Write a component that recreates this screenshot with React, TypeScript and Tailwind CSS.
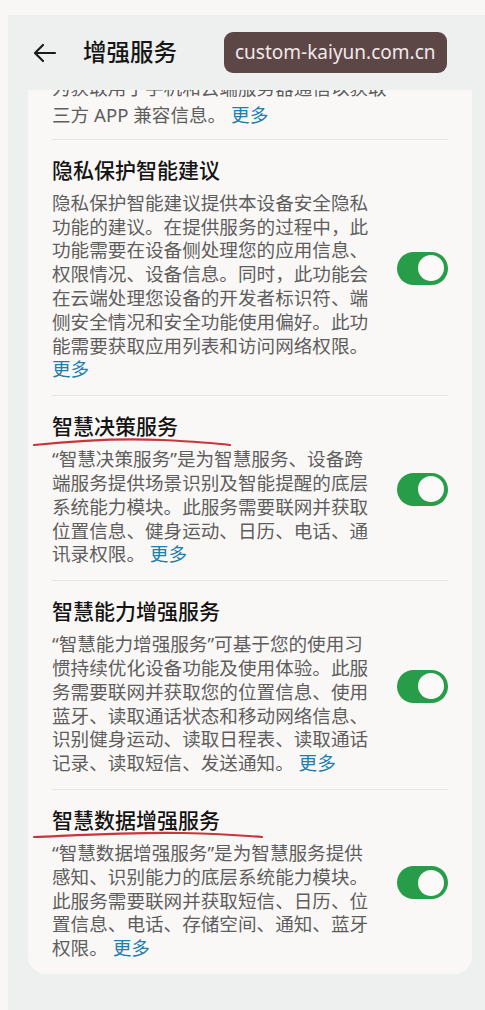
import React from "react";

type Section = {
  title: string;
  lines: string[];
  tail: string; // text on the last line before 更多
  underline?: string; // svg path for the red pen mark
};

const FONT = '"Noto Sans", "Noto Sans CJK SC", sans-serif';

const sections: Section[] = [
  {
    title: "隐私保护智能建议",
    lines: [
      "隐私保护智能建议提供本设备安全隐私",
      "功能的建议。在提供服务的过程中，此",
      "功能需要在设备侧处理您的应用信息、",
      "权限情况、设备信息。同时，此功能会",
      "在云端处理您设备的开发者标识符、端",
      "侧安全情况和安全功能使用偏好。此功",
      "能需要获取应用列表和访问网络权限。",
    ],
    tail: "",
  },
  {
    title: "智慧决策服务",
    lines: [
      "“智慧决策服务”是为智慧服务、设备跨",
      "端服务提供场景识别及智能提醒的底层",
      "系统能力模块。此服务需要联网并获取",
      "位置信息、健身运动、日历、电话、通",
    ],
    tail: "讯录权限。",
    underline: "M2 9 C 40 5, 90 2, 130 4 S 190 8, 198 9",
  },
  {
    title: "智慧能力增强服务",
    lines: [
      "“智慧能力增强服务”可基于您的使用习",
      "惯持续优化设备功能及使用体验。此服",
      "务需要联网并获取您的位置信息、使用",
      "蓝牙、读取通话状态和移动网络信息、",
      "识别健身运动、读取日程表、读取通话",
    ],
    tail: "记录、读取短信、发送通知。",
  },
  {
    title: "智慧数据增强服务",
    lines: [
      "“智慧数据增强服务”是为智慧服务提供",
      "感知、识别能力的底层系统能力模块。",
      "此服务需要联网并获取短信、日历、位",
      "置信息、电话、存储空间、通知、蓝牙",
    ],
    tail: "权限。",
    underline: "M2 7 C 50 5, 100 2, 150 3 S 215 6, 230 7",
  },
];

function Toggle() {
  return (
    <div className="flex h-[33px] w-[51px] shrink-0 items-center justify-end rounded-full bg-[#279c49] pr-[4px]">
      <div className="h-[26px] w-[26px] rounded-full bg-[#fbfaf8]" />
    </div>
  );
}

function More() {
  return <span className="text-[#1d7fb0]">更多</span>;
}

function Item({ s, last }: { s: Section; last: boolean }) {
  return (
    <div className={last ? "" : "border-b border-[#e6e6e4]"}>
      <div className="flex items-center justify-between pb-[14px] pt-[16px]">
        <div className="min-w-0">
          <div className="relative">
            <div className="whitespace-nowrap text-[21px] font-medium leading-[28px] text-[#141414]">
              {s.title}
            </div>
            {s.underline && (
              <svg
                className="absolute left-[-20px] top-[24px]"
                width="240"
                height="14"
                viewBox="0 0 240 14"
                fill="none"
              >
                <path d={s.underline} stroke="#c9343d" strokeWidth="2.2" strokeLinecap="round" />
              </svg>
            )}
          </div>
          <div className="mt-[7px] whitespace-nowrap text-[18.6px] leading-[23.8px] text-[#5e5e5e]">
            {s.lines.map((l, i) => (
              <div key={i}>{l}</div>
            ))}
            <div>
              {s.tail}
              {s.tail && " "}
              <More />
            </div>
          </div>
        </div>
        <Toggle />
      </div>
    </div>
  );
}

export default function App() {
  return (
    <div
      className="h-[1010px] w-[485px] overflow-hidden bg-[#f8f7f5] pl-[8px] pt-[15px]"
      style={{ fontFamily: FONT }}
    >
      <div className="h-full bg-[#eef0ef]">
        {/* header */}
        <div className="flex h-[75px] items-center">
          <svg className="ml-[25px]" width="24" height="20" viewBox="0 0 24 20" fill="none">
            <path d="M22 10H3M10 2L2 10l8 8" stroke="#1b1b1b" strokeWidth="2.2" strokeLinecap="round" strokeLinejoin="round" />
          </svg>
          <div className="ml-[26px] text-[23.5px] font-medium text-[#161616]">增强服务</div>
          <div className="ml-[47px] flex h-[41px] items-center rounded-[9px] bg-[#5d4646] px-[11px] text-[19px] text-[#f1e9e9]">
            custom-kaiyun.com.cn
          </div>
        </div>

        {/* card, scrolled so the previous item is partly under the header */}
        <div className="ml-[20px] w-[444px] overflow-hidden rounded-b-[18px] bg-[#faf8f6] px-[24px]">
          <div className="border-b border-[#e6e6e4] pb-[12px]">
            <div className="h-[11px] overflow-hidden">
              <div className="mt-[-14px] whitespace-nowrap text-[18.6px] leading-[23.8px] text-[#5e5e5e]">
                为获取用于手机和云端服务器通信以获取
              </div>
            </div>
            <div className="mt-[2px] whitespace-nowrap text-[18.6px] leading-[23.8px] text-[#5e5e5e]">
              三方 APP 兼容信息。 <More />
            </div>
          </div>
          {sections.map((s, i) => (
            <Item key={i} s={s} last={i === sections.length - 1} />
          ))}
        </div>
      </div>
    </div>
  );
}
